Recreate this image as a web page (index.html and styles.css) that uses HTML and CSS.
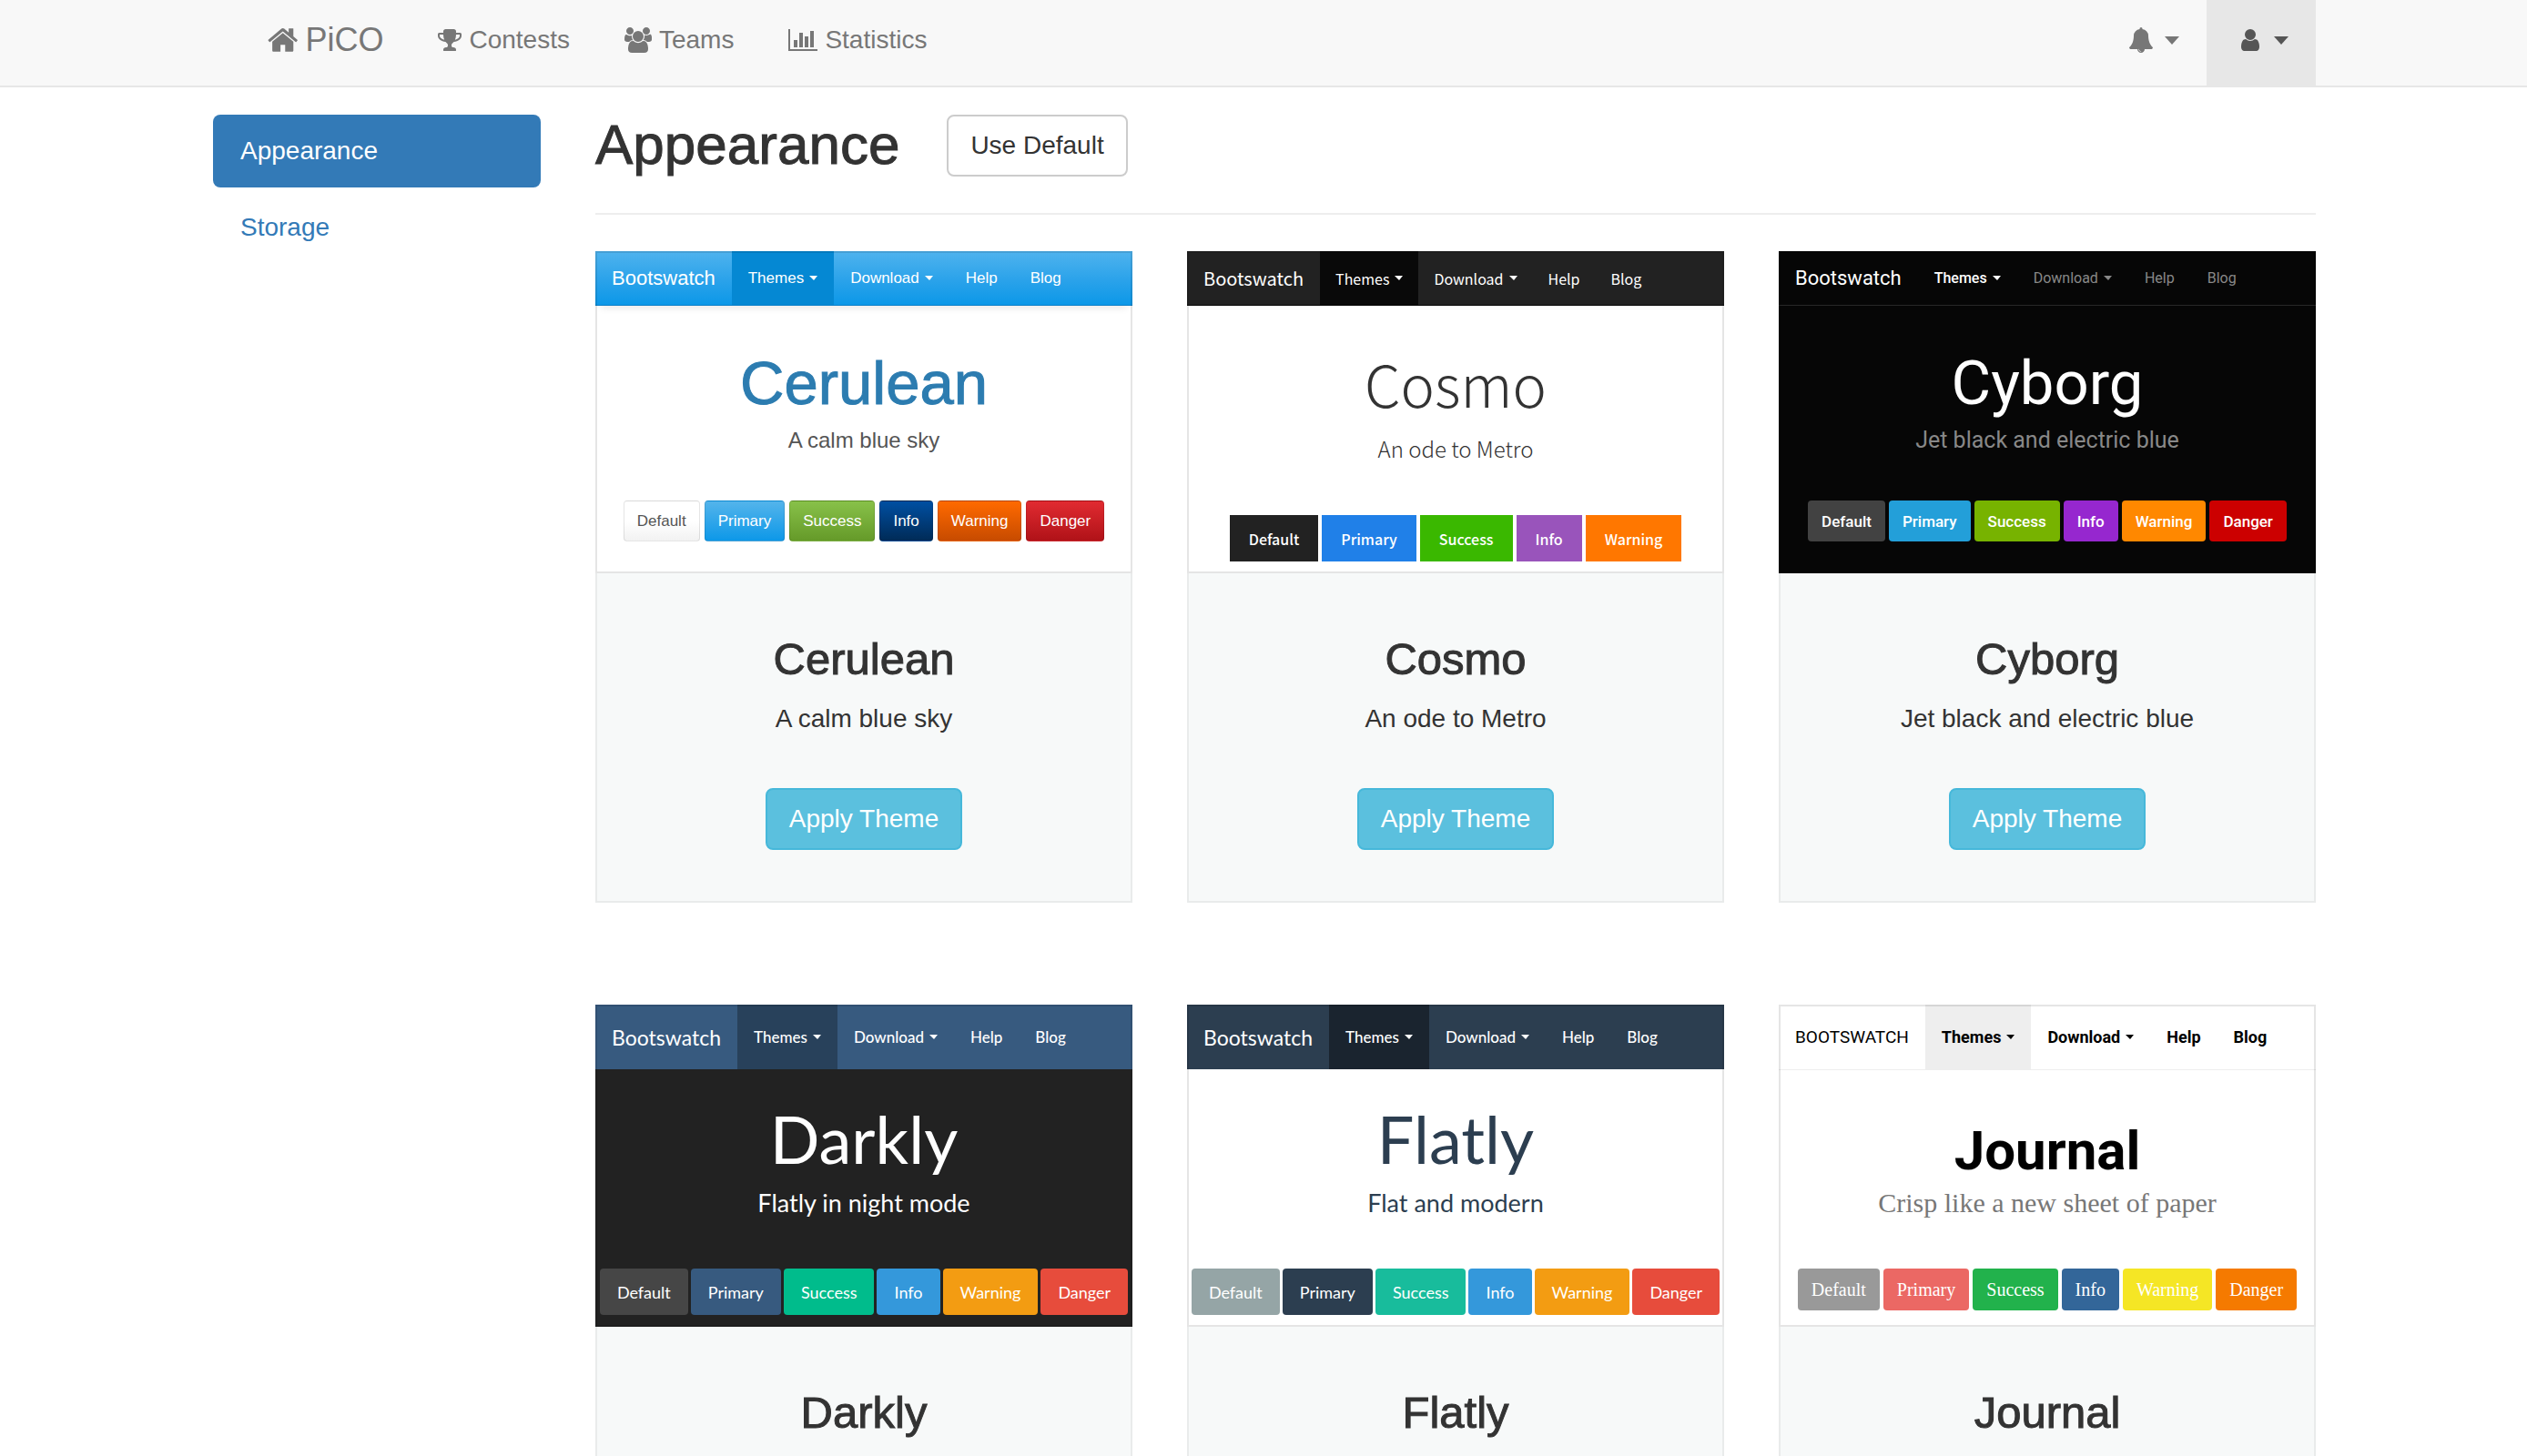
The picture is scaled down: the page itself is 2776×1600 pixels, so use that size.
FILE: index.html
```html
<!DOCTYPE html>
<html lang="en">
<head>
<meta charset="utf-8">
<title>PiCO - Appearance</title>
<link rel="stylesheet" href="styles.css">
</head>
<body>
<header class="topbar">
  <div class="container topbar-inner">
    <nav class="topnav">
      <a class="nav-link brand" href="#"><svg class="icon-home" viewBox="0 0 1664 1792"><path d="M1408 992v480q0 26-19 45t-45 19h-384v-384h-256v384h-384q-26 0-45-19t-19-45v-480q0-1 .5-3t.5-3l575-474 575 474q1 2 1 6zm223-69l-62 74q-8 9-21 11h-3q-13 0-21-7l-692-577-692 577q-12 8-24 7-13-2-21-11l-62-74q-8-10-7-23.5t11-21.5l719-599q32-26 76-26t76 26l244 204v-195q0-14 9-23t23-9h192q14 0 23 9t9 23v408l219 182q10 8 11 21.5t-7 23.5z"/></svg>PiCO</a>
      <a class="nav-link" href="#"><svg class="icon" viewBox="64 0 1664 1792"><path d="M522 883q-74-162-74-371h-256v96q0 78 94.500 162t235.500 113zm1078-275v-96h-256q0 209-74 371 141-29 235.500-113t94.500-162zm128-128v128q0 71-41.500 143t-112 130-173 97.500-215.500 44.500q-42 54-95 95-38 34-52.500 72.500t-14.500 89.500q0 54 30.500 91t97.500 37q75 0 133.500 45.500t58.500 114.500v64q0 14-9 23t-23 9h-832q-14 0-23-9t-9-23v-64q0-69 58.500-114.500t133.500-45.500q67 0 97.500-37t30.500-91q0-51-14.500-89.500t-52.500-72.500q-53-41-95-95-113-5-215.500-44.500t-173-97.500-112-130-41.500-143v-128q0-40 28-68t68-28h288v-96q0-66 47-113t113-47h576q66 0 113 47t47 113v96h288q40 0 68 28t28 68z"/></svg>Contests</a>
      <a class="nav-link" href="#"><svg class="icon" viewBox="64 0 1920 1792"><path d="M657 896q-162 5-265 128h-134q-82 0-138-40.500t-56-118.500q0-353 124-353 6 0 43.500 21t97.500 42.500 119 21.500q67 0 133-23-5 37-5 66 0 159 90 283zm1071 637q0 120-73 189.500t-194 69.500h-874q-121 0-194-69.500t-73-189.500q0-53 3.500-103.500t14-109 26.500-108.500 43-97.500 62-81 85.500-53.500 111.500-20q10 0 43 21.500t73 48 107 48 135 21.500 135-21.500 107-48 73-48 43-21.500q61 0 111.500 20t85.500 53.500 62 81 43 97.500 26.500 108.500 14 109 3.500 103.500zm-1024-1277q0 106-75 181t-181 75-181-75-75-181 75-181 181-75 181 75 75 181zm704 384q0 159-112.500 271.500t-271.500 112.500-271.500-112.500-112.500-271.500 112.500-271.500 271.500-112.500 271.500 112.500 112.500 271.500zm576 225q0 78-56 118.500t-138 40.500h-134q-103-123-265-128 90-124 90-283 0-29-5-66 66 23 133 23 59 0 119-21.500t97.500-42.500 43.500-21q124 0 124 353zm-128-609q0 106-75 181t-181 75-181-75-75-181 75-181 181-75 181 75 75 181z"/></svg>Teams</a>
      <a class="nav-link" href="#"><svg class="icon" viewBox="0 0 2048 1792"><path d="M640 896v512h-256v-512h256zm384-512v1024h-256v-1024h256zm1024 1152v128h-2048v-1536h128v1408h1920zm-640-896v768h-256v-768h256zm384-384v1152h-256v-1152h256z"/></svg>Statistics</a>
    </nav>
    <div class="tools">
      <button class="tool" type="button" aria-label="Notifications"><span class="tool-icon"><svg class="icon" viewBox="64 0 1664 1792"><path d="M912 1696q0-16-16-16-59 0-101.500-42.500t-42.500-101.500q0-16-16-16t-16 16q0 73 51.500 124.500t124.500 51.500q16 0 16-16zm816-288q0 52-38 90t-90 38h-448q0 106-75 181t-181 75-181-75-75-181h-448q-52 0-90-38t-38-90q50-42 91-88t85-119.500 74.500-158.500 50-206 19.500-260q0-152 117-282.500t307-158.500q-8-19-8-39 0-40 28-68t68-28 68 28 28 68q0 20-8 39 190 28 307 158.500t117 282.500q0 139 19.500 260t50 206 74.500 158.500 85 119.500 91 88z"/></svg></span><span class="caret"></span></button>
      <button class="tool tool-active" type="button" aria-label="Account"><span class="tool-icon"><svg class="icon" viewBox="256 0 1280 1792"><path d="M1536 1399q0 109-62.500 187t-150.500 78h-854q-88 0-150.500-78t-62.500-187q0-85 8.500-160.500t31.500-152 58.500-131 94-89 134.500-34.500q131 128 313 128t313-128q76 0 134.500 34.500t94 89 58.500 131 31.500 152 8.500 160.500zm-256-887q0 159-112.500 271.500t-271.500 112.500-271.500-112.500-112.500-271.500 112.500-271.500 271.500-112.500 271.500 112.500 112.500 271.500z"/></svg></span><span class="caret"></span></button>
    </div>
  </div>
</header>

<div class="container page">
  <nav class="sidebar">
    <a class="side-link side-active" href="#">Appearance</a>
    <a class="side-link" href="#">Storage</a>
  </nav>
  <main class="content">
    <div class="page-header">
      <h1>Appearance</h1>
      <button class="btn btn-default" type="button">Use Default</button>
    </div>
    <div class="themes">

      <article class="card">
        <div class="preview cerulean">
          <div class="bar"><a class="bar-brand" href="#">Bootswatch</a><a class="bar-link bar-active" href="#">Themes<span class="caret"></span></a><a class="bar-link" href="#">Download<span class="caret"></span></a><a class="bar-link" href="#">Help</a><a class="bar-link" href="#">Blog</a></div>
          <div class="name">Cerulean</div>
          <div class="tagline">A calm blue sky</div>
          <div class="swatches"><button class="sw sw-default" type="button">Default</button><button class="sw sw-primary" type="button">Primary</button><button class="sw sw-success" type="button">Success</button><button class="sw sw-info" type="button">Info</button><button class="sw sw-warning" type="button">Warning</button><button class="sw sw-danger" type="button">Danger</button></div>
        </div>
        <div class="caption"><h3>Cerulean</h3><p>A calm blue sky</p><button class="btn btn-info" type="button">Apply Theme</button></div>
      </article>

      <article class="card">
        <div class="preview cosmo">
          <div class="bar"><a class="bar-brand" href="#">Bootswatch</a><a class="bar-link bar-active" href="#">Themes<span class="caret"></span></a><a class="bar-link" href="#">Download<span class="caret"></span></a><a class="bar-link" href="#">Help</a><a class="bar-link" href="#">Blog</a></div>
          <div class="name">Cosmo</div>
          <div class="tagline">An ode to Metro</div>
          <div class="swatches"><button class="sw sw-default" type="button">Default</button><button class="sw sw-primary" type="button">Primary</button><button class="sw sw-success" type="button">Success</button><button class="sw sw-info" type="button">Info</button><button class="sw sw-warning" type="button">Warning</button></div>
        </div>
        <div class="caption"><h3>Cosmo</h3><p>An ode to Metro</p><button class="btn btn-info" type="button">Apply Theme</button></div>
      </article>

      <article class="card">
        <div class="preview cyborg">
          <div class="bar"><a class="bar-brand" href="#">Bootswatch</a><a class="bar-link bar-active" href="#">Themes<span class="caret"></span></a><a class="bar-link" href="#">Download<span class="caret"></span></a><a class="bar-link" href="#">Help</a><a class="bar-link" href="#">Blog</a></div>
          <div class="name">Cyborg</div>
          <div class="tagline">Jet black and electric blue</div>
          <div class="swatches"><button class="sw sw-default" type="button">Default</button><button class="sw sw-primary" type="button">Primary</button><button class="sw sw-success" type="button">Success</button><button class="sw sw-info" type="button">Info</button><button class="sw sw-warning" type="button">Warning</button><button class="sw sw-danger" type="button">Danger</button></div>
        </div>
        <div class="caption"><h3>Cyborg</h3><p>Jet black and electric blue</p><button class="btn btn-info" type="button">Apply Theme</button></div>
      </article>

      <article class="card">
        <div class="preview lato darkly">
          <div class="bar"><a class="bar-brand" href="#">Bootswatch</a><a class="bar-link bar-active" href="#">Themes<span class="caret"></span></a><a class="bar-link" href="#">Download<span class="caret"></span></a><a class="bar-link" href="#">Help</a><a class="bar-link" href="#">Blog</a></div>
          <div class="name">Darkly</div>
          <div class="tagline">Flatly in night mode</div>
          <div class="swatches"><button class="sw sw-default" type="button">Default</button><button class="sw sw-primary" type="button">Primary</button><button class="sw sw-success" type="button">Success</button><button class="sw sw-info" type="button">Info</button><button class="sw sw-warning" type="button">Warning</button><button class="sw sw-danger" type="button">Danger</button></div>
        </div>
        <div class="caption"><h3>Darkly</h3></div>
      </article>

      <article class="card">
        <div class="preview lato flatly">
          <div class="bar"><a class="bar-brand" href="#">Bootswatch</a><a class="bar-link bar-active" href="#">Themes<span class="caret"></span></a><a class="bar-link" href="#">Download<span class="caret"></span></a><a class="bar-link" href="#">Help</a><a class="bar-link" href="#">Blog</a></div>
          <div class="name">Flatly</div>
          <div class="tagline">Flat and modern</div>
          <div class="swatches"><button class="sw sw-default" type="button">Default</button><button class="sw sw-primary" type="button">Primary</button><button class="sw sw-success" type="button">Success</button><button class="sw sw-info" type="button">Info</button><button class="sw sw-warning" type="button">Warning</button><button class="sw sw-danger" type="button">Danger</button></div>
        </div>
        <div class="caption"><h3>Flatly</h3></div>
      </article>

      <article class="card">
        <div class="preview journal">
          <div class="bar"><a class="bar-brand" href="#">BOOTSWATCH</a><a class="bar-link bar-active" href="#">Themes<span class="caret"></span></a><a class="bar-link" href="#">Download<span class="caret"></span></a><a class="bar-link" href="#">Help</a><a class="bar-link" href="#">Blog</a></div>
          <div class="name">Journal</div>
          <div class="tagline">Crisp like a new sheet of paper</div>
          <div class="swatches"><button class="sw sw-default" type="button">Default</button><button class="sw sw-primary" type="button">Primary</button><button class="sw sw-success" type="button">Success</button><button class="sw sw-info" type="button">Info</button><button class="sw sw-warning" type="button">Warning</button><button class="sw sw-danger" type="button">Danger</button></div>
        </div>
        <div class="caption"><h3>Journal</h3></div>
      </article>

    </div>
  </main>
</div>
</body>
</html>
```
FILE: styles.css
```css
* { box-sizing: border-box; }

body {
  margin: 0;
  background: #fff;
  color: #333;
  font-family: "Liberation Sans", Arial, sans-serif;
  font-size: 28px;
  line-height: 40px;
}

a { color: inherit; text-decoration: none; }

button {
  font: inherit;
  color: inherit;
  cursor: pointer;
}

h1, h3, p { margin: 0; font-weight: 400; }

h1, h3 { -webkit-text-stroke: 1px currentColor; }

svg { fill: currentColor; display: block; }

.container {
  max-width: 2312px;
  margin: 0 auto;
  padding-left: 2px;
}

.caret {
  border: 8px solid transparent;
  border-top: 9px solid currentColor;
  border-bottom: 0;
}

/* top navigation */
.topbar {
  background: #f8f8f8;
  border-bottom: 2px solid #e7e7e7;
  color: #777;
}

.topbar-inner {
  display: flex;
  justify-content: space-between;
}

.topnav { display: flex; padding-left: 30px; }

.nav-link {
  display: flex;
  align-items: center;
  gap: 8px;
  padding: 24px 30px 30px;
}

.brand { font-size: 36px; }

.icon { height: 28px; }
.icon-home { height: 36px; }

.tools { display: flex; }

.tool {
  display: flex;
  align-items: center;
  gap: 8px;
  padding: 24px 30px 30px;
  border: 0;
  background: none;
}

.tool-active { background: #e7e7e7; color: #555; }

.tool-icon {
  width: 36px;
  display: flex;
  justify-content: center;
}

/* page layout */
.page {
  display: grid;
  grid-template-columns: 360px minmax(0, 1fr);
  gap: 60px;
  padding-top: 30px;
}

.sidebar {
  display: flex;
  flex-direction: column;
  gap: 4px;
}

.side-link {
  padding: 20px 30px;
  border-radius: 8px;
  color: #337ab7;
}

.side-active { background: #337ab7; color: #fff; }

.page-header {
  display: flex;
  align-items: flex-start;
  gap: 52px;
  padding-bottom: 40px;
  border-bottom: 2px solid #eee;
  margin-bottom: 40px;
}

h1 { font-size: 62px; line-height: 66px; }

.btn {
  padding: 12px 24px;
  border: 2px solid #ccc;
  border-radius: 8px;
  background: #fff;
}

.btn-info {
  background: #5bc0de;
  border-color: #46b8da;
  color: #fff;
}

/* theme cards */
.themes {
  display: grid;
  grid-template-columns: repeat(3, minmax(0, 1fr));
  gap: 112px 60px;
}

.caption {
  display: flex;
  flex-direction: column;
  align-items: center;
  padding: 68px 20px 56px;
  background: #f7f9f9;
  border: 2px solid #e9ebeb;
  border-top: 0;
}

h3 { font-size: 49px; line-height: 52px; }

.caption p { margin: 20px 0 56px; }

/* miniature theme previews */
.preview {
  position: relative;
  display: flex;
  flex-direction: column;
  align-items: center;
  aspect-ratio: 5 / 3;
  white-space: nowrap;
}

.preview::after {
  content: "";
  position: absolute;
  inset: 0;
  border: 2px solid rgba(0, 0, 0, 0.1);
  pointer-events: none;
}

.bar {
  display: flex;
  align-self: stretch;
  height: 60px;
  margin-bottom: 49px;
  color: #fff;
  font-size: 17px;
}

.bar-brand, .bar-link {
  display: flex;
  align-items: center;
  padding: 0 18px;
}

.bar-brand { font-size: 22px; }

.bar .caret {
  margin-left: 6px;
  border-width: 5px 4px 0 5px;
}

.name { font-size: 67px; line-height: 72px; }
.tagline { font-size: 24px; line-height: 32px; }

.swatches {
  display: flex;
  gap: 4px;
}

.sw {
  height: 45px;
  padding: 0 15px;
  border: 0;
  border-radius: 4px;
  color: #fff;
  font-size: 17px;
  line-height: 24px;
}

.cerulean .bar {
  background: linear-gradient(#4fb3ee, #2aa2ea 55%, #0c98e8);
  border-bottom: 1px solid #0b7fc8;
  box-shadow: 0 8px 8px -6px rgba(0, 0, 0, 0.1);
}
.cerulean .bar-active { background: #0588d3; }
.cerulean .name { color: #2c7cb0; -webkit-text-stroke: 1px currentColor; margin-bottom: 11px; }
.cerulean .tagline { color: #555; margin-bottom: 50px; }
.cerulean .swatches { gap: 5px; }
.cerulean .sw { padding: 0 14px; border: 1px solid rgba(0, 0, 0, 0.1); }
.cerulean .sw-default { background: linear-gradient(#fff 50%, #f2f2f2); color: #555; }
.cerulean .sw-primary { background: linear-gradient(#54b4eb, #0d98e8); }
.cerulean .sw-success { background: linear-gradient(#88c149, #659a29); }
.cerulean .sw-info { background: linear-gradient(#004fa2, #002b57); }
.cerulean .sw-warning { background: linear-gradient(#ff6a00, #c74b00); }
.cerulean .sw-danger { background: linear-gradient(#e12b31, #b01218); }

.cosmo { font-family: "Noto Sans CJK SC", sans-serif; }
.cosmo .bar { background: #222; border-bottom: 1px solid #080808; font-size: 16px; }
.cosmo .bar-brand { font-size: 20px; }
.cosmo .bar-link { padding: 0 17px; }
.cosmo .bar-active { background: #090909; }
.cosmo .name { font-size: 63px; font-weight: 200; margin-bottom: 20px; }
.cosmo .tagline { font-weight: 200; margin-bottom: 57px; }
.cosmo .sw { height: 51px; padding: 0 21px; border-radius: 0; font-size: 16px; font-weight: 500; }
.cosmo .sw-default { background: #222; }
.cosmo .sw-primary { background: #2080e8; }
.cosmo .sw-success { background: #3ab800; }
.cosmo .sw-info { background: #9954bb; }
.cosmo .sw-warning { background: #ff7700; }

.cyborg { background: #060606; color: #fff; font-family: Roboto, sans-serif; }
.cyborg .bar { border-bottom: 1px solid #282828; color: #888; font-size: 16px; }
.cyborg .bar-brand { color: #fff; }
.cyborg .bar-active { color: #fff; font-weight: 500; }
.cyborg .name { margin-bottom: 11px; }
.cyborg .tagline { color: #888; font-size: 25px; margin-bottom: 50px; }
.cyborg .sw { font-weight: 500; }
.cyborg .sw-default { background: #424242; }
.cyborg .sw-primary { background: #239fd9; }
.cyborg .sw-success { background: #77b300; }
.cyborg .sw-info { background: #9627cf; }
.cyborg .sw-warning { background: #ff8800; }
.cyborg .sw-danger { background: #cc0000; }

.lato { font-family: Lato, sans-serif; }
.lato .bar { height: 71px; margin-bottom: 40px; }
.lato .bar-brand { font-size: 23px; }
.lato .bar-link { font-weight: 500; }
.lato .name { font-size: 72px; margin-bottom: 19px; }
.lato .tagline { font-size: 27px; margin-bottom: 56px; }
.lato .swatches { gap: 3px; }
.lato .sw { height: 51px; padding: 0 19px; font-size: 18px; }
.lato .sw-info { background: #3498db; }
.lato .sw-warning { background: #f39c12; }
.lato .sw-danger { background: #e74c3c; }

.darkly { background: #222; color: #fff; }
.darkly .bar { background: #375a7f; }
.darkly .bar-active { background: #28415b; }
.darkly .sw-default { background: #464646; }
.darkly .sw-primary { background: #375a7f; }
.darkly .sw-success { background: #00bc8c; }

.flatly { color: #2c3e50; }
.flatly .bar { background: #2c3e50; }
.flatly .bar-active { background: #1a242f; }
.flatly .sw-default { background: #95a5a6; }
.flatly .sw-primary { background: #2c3e50; }
.flatly .sw-success { background: #18bc9c; }

.journal { color: #000; font-family: Roboto, sans-serif; }
.journal .bar { height: 72px; margin-bottom: 53px; border-bottom: 1px solid #eee; color: #000; font-size: 18px; font-weight: 700; }
.journal .bar-brand { font-size: 19px; font-weight: 400; }
.journal .bar-active { background: #eee; }
.journal .name { font-size: 60px; font-weight: 700; margin-bottom: 5px; }
.journal .tagline { color: #777; font-family: "Liberation Serif", serif; font-size: 30px; margin-bottom: 56px; }
.journal .sw { height: 46px; font-family: "Liberation Serif", serif; font-size: 20px; }
.journal .sw-default { background: #999; }
.journal .sw-primary { background: #eb6864; }
.journal .sw-success { background: #22b24c; }
.journal .sw-info { background: #336699; }
.journal .sw-warning { background: #f5e625; }
.journal .sw-danger { background: #f57a00; }
```
